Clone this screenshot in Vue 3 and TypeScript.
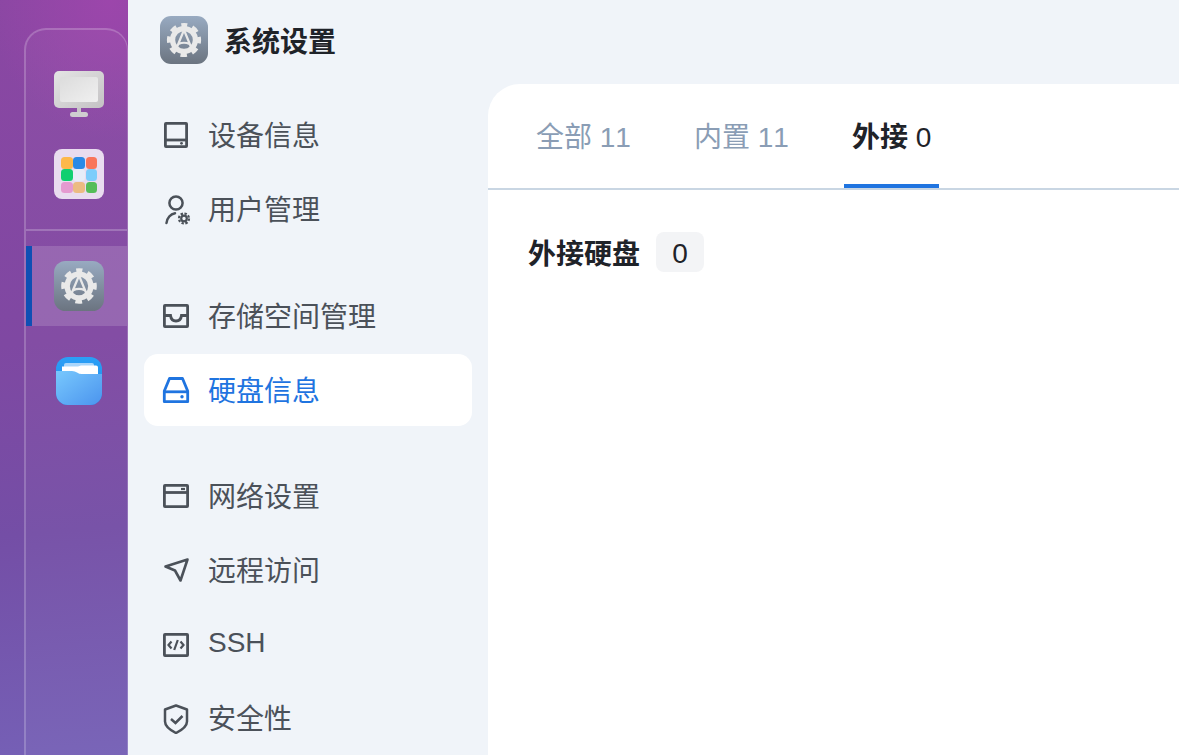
<script setup lang="ts">
import { ref } from 'vue'

interface NavItem {
  label: string
  icon: string
}

const launcherColors = [
  '#fdb84a', '#2b8ae6', '#f9745a',
  '#0fcf70', '#e6edf8', '#7ccdfb',
  '#e59ad0', '#ecbb82', '#55bd58'
]

const navGroups: NavItem[][] = [
  [
    { label: '设备信息', icon: 'device' },
    { label: '用户管理', icon: 'user' }
  ],
  [
    { label: '存储空间管理', icon: 'inbox' },
    { label: '硬盘信息', icon: 'disk' }
  ],
  [
    { label: '网络设置', icon: 'network' },
    { label: '远程访问', icon: 'remote' },
    { label: 'SSH', icon: 'ssh' },
    { label: '安全性', icon: 'shield' }
  ]
]

const activeNav = ref('硬盘信息')

const tabs = [
  { label: '全部', count: 11 },
  { label: '内置', count: 11 },
  { label: '外接', count: 0 }
]
const activeTab = ref('外接')
</script>

<template>
  <div class="app">
    <aside class="dock">
      <div class="dock-panel">
        <div class="dock-top">
          <div class="dock-row">
            <svg class="icon-monitor" width="50" height="46" viewBox="0 0 50 46">
              <defs>
                <linearGradient id="mon-a" x1="0" y1="0" x2="1" y2="1">
                  <stop offset="0" stop-color="#e4e4e4" />
                  <stop offset="1" stop-color="#c4c2c4" />
                </linearGradient>
                <linearGradient id="mon-b" x1="0" y1="0" x2="1" y2="1">
                  <stop offset="0" stop-color="#dcdcdc" />
                  <stop offset="1" stop-color="#f0f0f0" />
                </linearGradient>
              </defs>
              <rect x="23" y="36" width="4" height="6" fill="#c8c6c8" />
              <rect x="16" y="41" width="18" height="5" rx="2.5" fill="#cfcdd0" />
              <rect x="0" y="0" width="50" height="37" rx="5" fill="url(#mon-a)" />
              <rect x="6" y="6" width="38" height="25" rx="2" fill="url(#mon-b)" />
            </svg>
          </div>
          <div class="dock-row">
            <div class="launcher">
              <span v-for="c in launcherColors" :key="c" class="launcher-dot" :style="{ background: c }"></span>
            </div>
          </div>
        </div>
        <div class="dock-bottom">
          <div class="dock-row dock-row-active">
            <svg width="50" height="50" viewBox="0 0 48 48">
              <defs>
                <linearGradient id="gear-bg" x1="0" y1="0" x2="0" y2="1">
                  <stop offset="0" stop-color="#98aac1" />
                  <stop offset="1" stop-color="#6b7480" />
                </linearGradient>
              </defs>
              <rect width="48" height="48" rx="11" fill="url(#gear-bg)" />
              <g fill="none" stroke="#e9e9e9">
                <circle cx="24" cy="24" r="11.4" stroke-width="5.2" />
                <circle cx="24" cy="24" r="14.8" stroke-width="4.6" stroke-dasharray="6.4 5.22" stroke-dashoffset="3.2" transform="rotate(-90 24 24)" />
                <path d="M24 14L17 31M24 14L31 31M18.5 28Q24 25.5 29.5 28" stroke-width="2.2" />
              </g>
            </svg>
          </div>
          <div class="dock-row">
            <svg width="46" height="48" viewBox="0 0 46 48">
              <defs>
                <linearGradient id="fold-back" x1="0" y1="0" x2="0" y2="1">
                  <stop offset="0" stop-color="#2ba0f6" />
                  <stop offset="1" stop-color="#1f86e8" />
                </linearGradient>
                <linearGradient id="fold-front" x1="0" y1="0" x2="1" y2="1">
                  <stop offset="0" stop-color="#78c8fd" />
                  <stop offset="1" stop-color="#4b94ee" />
                </linearGradient>
              </defs>
              <rect width="46" height="48" rx="12" fill="url(#fold-back)" />
              <path d="M10 6H36a2 2 0 0 1 2 2V20H8V8a2 2 0 0 1 2-2Z" fill="#a9d6fb" />
              <path d="M6 9.5H22L25 8.5H40a2 2 0 0 1 2 2V22H6Z" fill="#fff" />
              <path d="M0 14H16Q19 14 21 15.5T26 17H46V36a12 12 0 0 1-12 12H12A12 12 0 0 1 0 36Z" fill="url(#fold-front)" />
            </svg>
          </div>
        </div>
      </div>
    </aside>

    <nav class="sidebar">
      <header class="brand">
        <svg width="48" height="48" viewBox="0 0 48 48">
          <rect width="48" height="48" rx="11" fill="url(#gear-bg)" />
          <g fill="none" stroke="#e9e9e9">
            <circle cx="24" cy="24" r="11.4" stroke-width="5.2" />
            <circle cx="24" cy="24" r="14.8" stroke-width="4.6" stroke-dasharray="6.4 5.22" stroke-dashoffset="3.2" transform="rotate(-90 24 24)" />
            <path d="M24 14L17 31M24 14L31 31M18.5 28Q24 25.5 29.5 28" stroke-width="2.2" />
          </g>
        </svg>
        <h1 class="brand-title">系统设置</h1>
      </header>

      <div class="nav-groups">
        <ul v-for="(group, i) in navGroups" :key="i" class="nav-group">
          <li
            v-for="item in group"
            :key="item.label"
            class="nav-item"
            :class="{ active: item.label === activeNav }"
          >
            <svg class="nav-icon" width="32" height="32" viewBox="0 0 32 32" fill="none" stroke="currentColor" stroke-width="2.8">
              <template v-if="item.icon === 'device'">
                <rect x="5.4" y="4.4" width="21.2" height="23.2" rx="0.6" />
                <path d="M5 21H27" />
                <circle cx="21.5" cy="24.3" r="1.4" fill="currentColor" stroke="none" />
              </template>
              <template v-else-if="item.icon === 'user'">
                <circle cx="16" cy="10" r="6.6" stroke-width="2.5" />
                <path d="M6.5 30C7 25 10.5 21 15 20.2" stroke-width="2.5" stroke-linecap="round" />
                <circle cx="24" cy="25.5" r="2.8" stroke-width="2.2" />
                <circle cx="24" cy="25.5" r="5" stroke-width="2.2" stroke-dasharray="2.4 1.5" />
              </template>
              <template v-else-if="item.icon === 'inbox'">
                <rect x="4.4" y="5.4" width="23.2" height="21.2" rx="0.6" />
                <path d="M4 15.5H10.5C11 19.5 13 21 16 21C19 21 21 19.5 21.5 15.5H28" />
              </template>
              <template v-else-if="item.icon === 'disk'">
                <path d="M9.5 4.5H22.5L27.7 17V27.7H4.3V17Z" stroke-linejoin="round" />
                <path d="M4.5 17.8H27.5" />
                <circle cx="22" cy="22.8" r="1.7" fill="currentColor" stroke="none" />
              </template>
              <template v-else-if="item.icon === 'network'">
                <rect x="4.4" y="5.4" width="23.2" height="21.2" rx="0.6" />
                <path d="M4 12.5H28" />
                <path d="M21 9H25" stroke-width="2.2" />
              </template>
              <template v-else-if="item.icon === 'remote'">
                <path d="M27.5 5.5L5.5 12.5L15 16.5L20.5 26.5Z" stroke-linejoin="round" stroke-width="2.6" />
              </template>
              <template v-else-if="item.icon === 'ssh'">
                <rect x="4.4" y="6.4" width="23.2" height="21.2" rx="0.6" />
                <path d="M11.5 13.5L8.5 17L11.5 20.5M20.5 13.5L23.5 17L20.5 20.5M17.8 12L14.2 22" stroke-width="2.2" />
              </template>
              <template v-else>
                <path d="M16 3.5L27 7.5V19.5C27 24 21 28.5 16 31C11 28.5 5 24 5 19.5V7.5Z" stroke-linejoin="round" stroke-width="2.5" />
                <path d="M11 17L15.5 21L22.5 14" stroke-width="2.5" />
              </template>
            </svg>
            <span class="nav-label">{{ item.label }}</span>
          </li>
        </ul>
      </div>
    </nav>

    <main class="main">
      <div class="tabs">
        <div
          v-for="tab in tabs"
          :key="tab.label"
          class="tab"
          :class="{ active: tab.label === activeTab }"
        >
          <span class="tab-label">{{ tab.label }}</span> {{ tab.count }}
        </div>
      </div>
      <section class="section">
        <h2 class="section-title">外接硬盘</h2>
        <span class="badge">0</span>
      </section>
    </main>
  </div>
</template>

<style>
html,
body {
  margin: 0;
  overflow: hidden;
  background: #f0f4f9;
}
</style>

<style scoped>
.app {
  display: flex;
  width: 1179px;
  height: 755px;
  overflow: hidden;
  font-family: "Liberation Sans", "Noto Sans CJK SC", sans-serif;
  font-size: 28px;
  font-kerning: none;
}

.dock {
  flex: none;
  box-sizing: border-box;
  width: 128px;
  padding: 28px 0 0 24px;
  background:
    radial-gradient(ellipse 120px 140px at 110px 0, rgba(158, 70, 172, 0.9), transparent),
    linear-gradient(175deg, #8b47a3 0%, #7f48a2 45%, #744ea6 70%, #7560b6 100%);
}

.dock-panel {
  box-sizing: border-box;
  height: 100%;
  border: 2px solid rgba(255, 255, 255, 0.2);
  border-right-width: 1px;
  border-bottom: 0;
  border-radius: 22px 22px 0 0;
  background: rgba(255, 255, 255, 0.03);
}

.dock-top {
  padding: 24px 0 15px;
  border-bottom: 2px solid rgba(255, 255, 255, 0.22);
}

.dock-bottom {
  display: flex;
  flex-direction: column;
  gap: 15px;
  padding-top: 15px;
}

.dock-row {
  display: flex;
  align-items: center;
  justify-content: center;
  height: 80px;
  padding-left: 5px;
}

.dock-row-active {
  box-shadow: inset 6px 0 0 #0f4fb4;
  background: rgba(255, 255, 255, 0.15);
}

.launcher {
  display: grid;
  grid-template-columns: repeat(3, 11.5px);
  grid-auto-rows: 11.5px;
  gap: 0.75px;
  box-sizing: border-box;
  width: 50px;
  height: 50px;
  padding: 8px 7px;
  border-radius: 8px;
  background: #e9dcef;
}

.launcher-dot {
  border-radius: 3.5px;
}

.sidebar {
  flex: none;
  box-sizing: border-box;
  width: 360px;
  padding: 0 16px;
  background: #f0f4f9;
}

.brand {
  display: flex;
  align-items: center;
  gap: 16px;
  height: 84px;
  padding-left: 16px;
  box-sizing: border-box;
  padding-bottom: 4px;
}

.brand-title {
  margin: 0;
  font-size: 28px;
  font-weight: 700;
  color: #1f2329;
}

.nav-groups {
  display: flex;
  flex-direction: column;
  gap: 34px;
  padding-top: 15px;
}

.nav-group {
  display: flex;
  flex-direction: column;
  gap: 2px;
  margin: 0;
  padding: 0;
  list-style: none;
}

.nav-group:first-child {
  margin-bottom: 1px;
}

.nav-item {
  display: flex;
  align-items: center;
  gap: 16px;
  height: 72px;
  padding-left: 16px;
  border-radius: 14px;
  color: #4b5159;
}

.nav-item.active {
  background: #fff;
  color: #1f74e0;
}

.nav-icon {
  flex: none;
}

.nav-label {
  padding-bottom: 2px;
}

.main {
  flex: 1;
  margin-top: 84px;
  border-top-left-radius: 32px;
  background: #fff;
}

.tabs {
  display: flex;
  gap: 47px;
  height: 106px;
  box-sizing: border-box;
  padding-left: 40px;
  border-bottom: 2px solid #c9d6e3;
}

.tab {
  box-sizing: border-box;
  height: 104px;
  padding: 34px 8px 0;
  line-height: 40px;
  color: #8a9db5;
  white-space: nowrap;
}

.tab.active {
  border-bottom: 4px solid #1f74e0;
  color: #1f2329;
}

.tab.active .tab-label {
  font-weight: 700;
}

.section {
  display: flex;
  align-items: center;
  gap: 16px;
  padding: 42px 0 0 40px;
}

.section-title {
  margin: 0;
  font-size: 28px;
  font-weight: 700;
  color: #1f2329;
}

.badge {
  box-sizing: border-box;
  width: 48px;
  height: 40px;
  border-radius: 8px;
  background: #f3f4f6;
  color: #1f2329;
  line-height: 43px;
  text-align: center;
}
</style>
